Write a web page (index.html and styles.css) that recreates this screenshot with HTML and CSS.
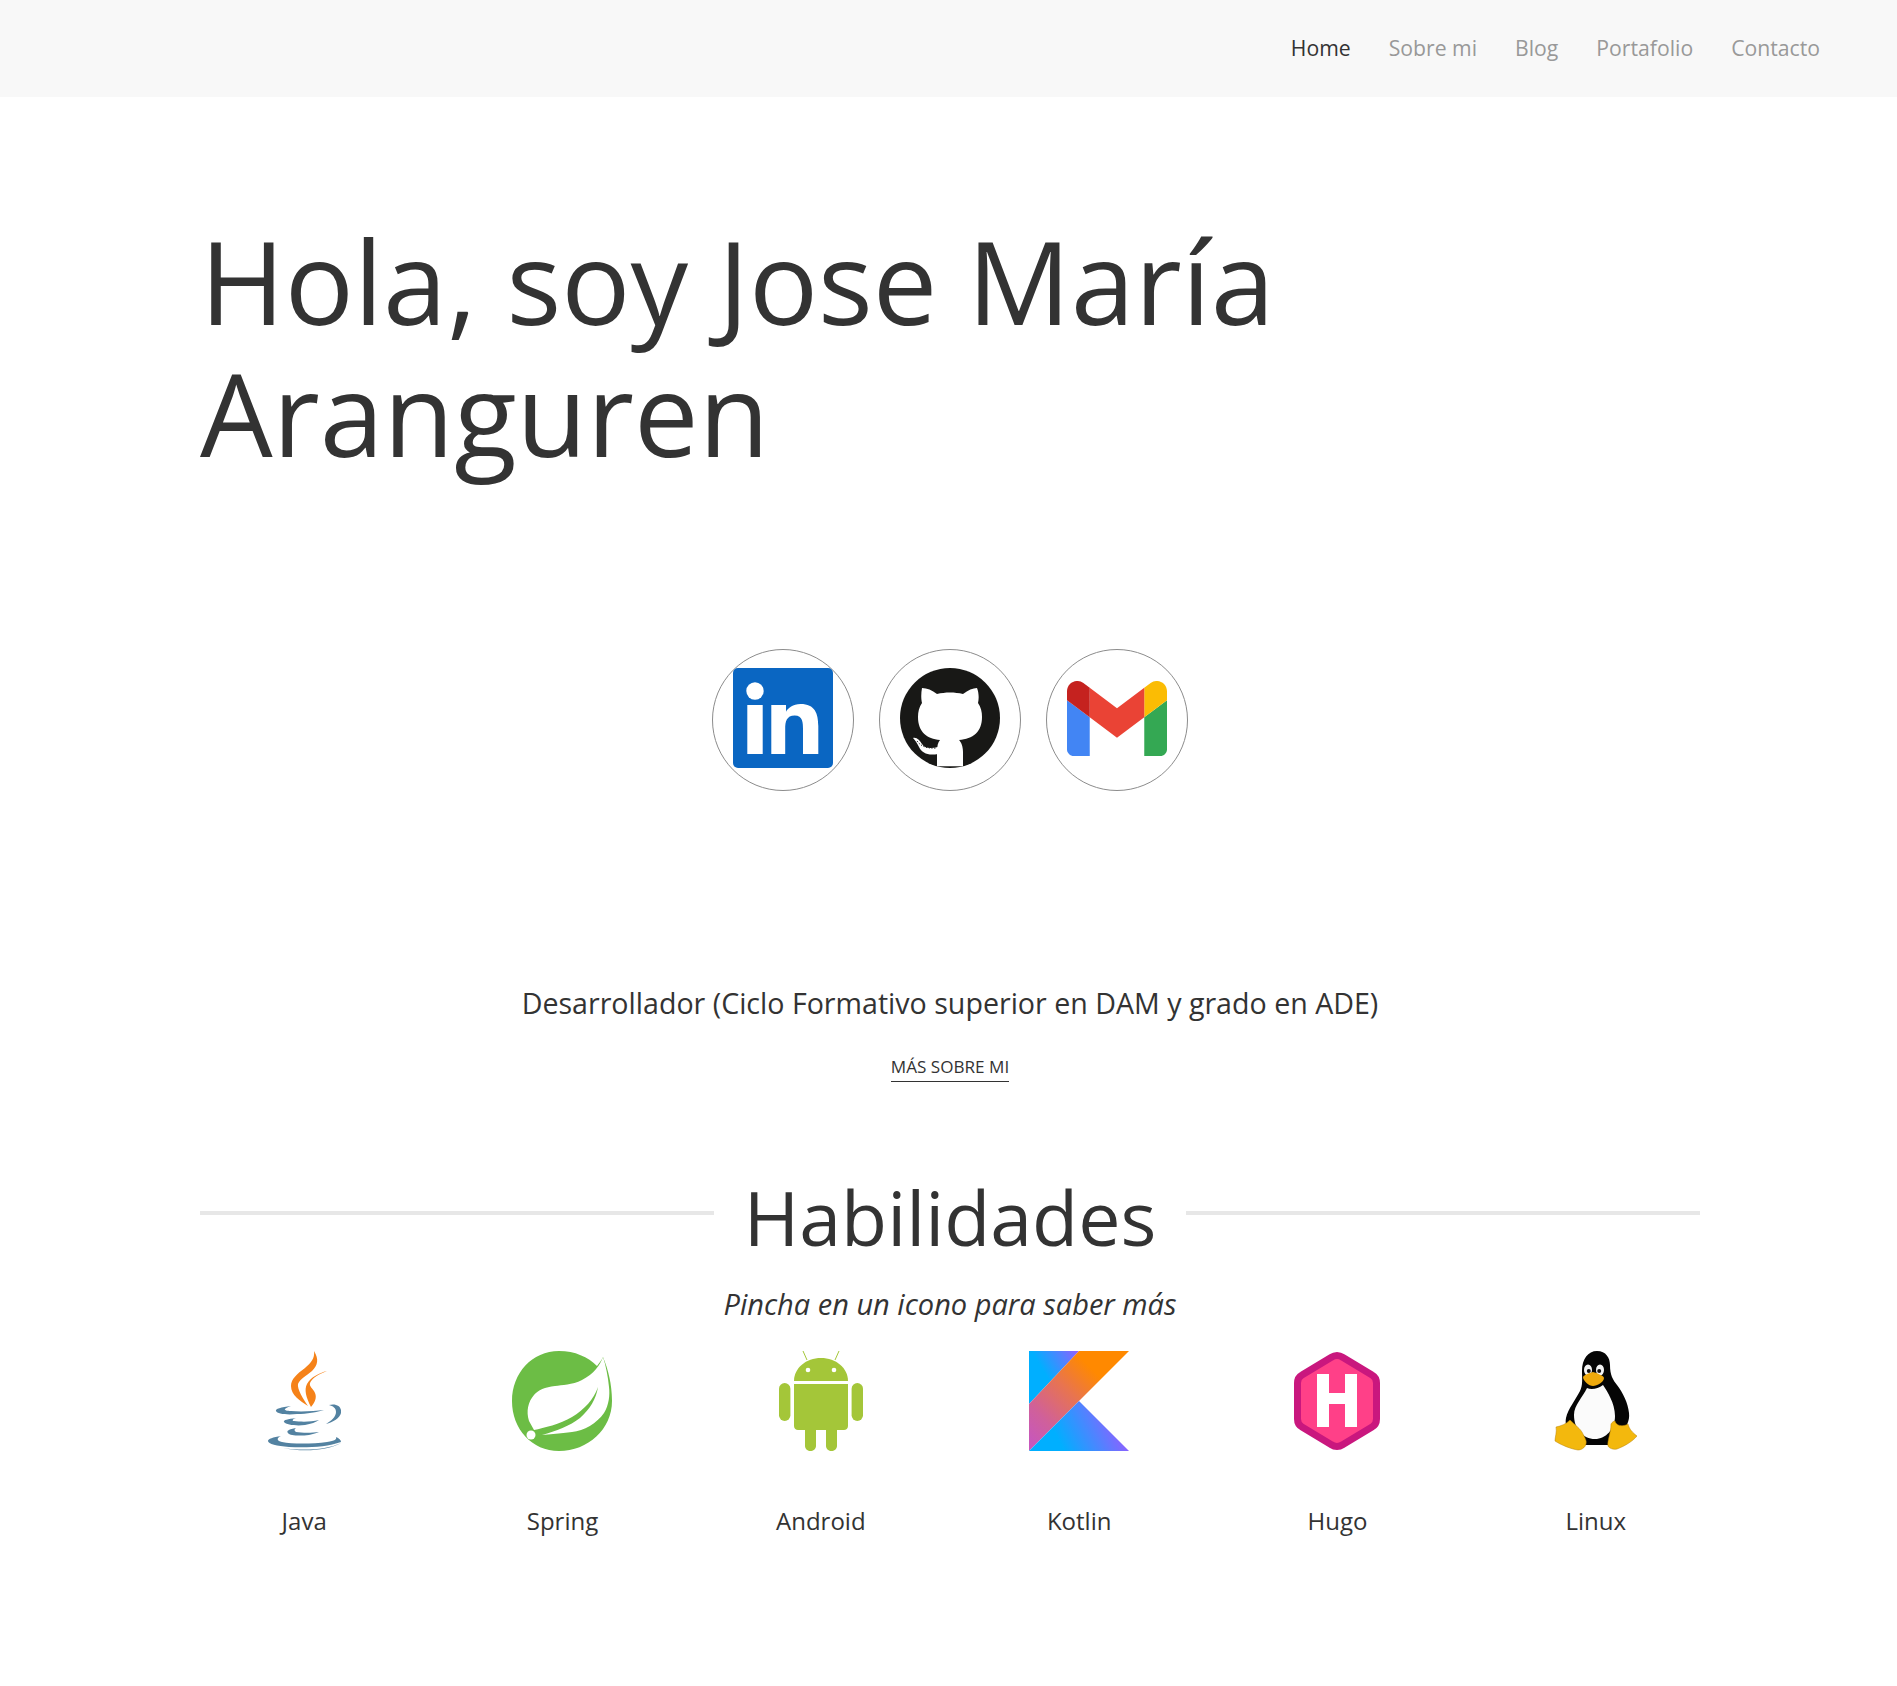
FILE: index.html
```html
<!DOCTYPE html>
<html lang="es">
<head>
  <meta charset="UTF-8">
  <meta name="viewport" content="width=device-width, initial-scale=1.0">
  <title>Jose María Aranguren</title>
  <link rel="stylesheet" href="styles.css">
</head>
<body>
  <header class="navbar">
    <ul class="nav">
      <li><a class="active" href="#">Home</a></li>
      <li><a href="#">Sobre mi</a></li>
      <li><a href="#">Blog</a></li>
      <li><a href="#">Portafolio</a></li>
      <li><a href="#">Contacto</a></li>
    </ul>
  </header>

  <main class="container">
    <h1 class="hero-title">Hola, soy Jose María Aranguren</h1>

    <div class="social">
      <a class="social-link" href="#" aria-label="LinkedIn">
        <svg viewBox="0 0 100 100" width="100" height="100">
          <rect width="100" height="100" rx="5" fill="#0a66c2"/>
          <circle cx="22" cy="23" r="8.7" fill="#fff"/>
          <rect x="14.3" y="37" width="15.4" height="49" fill="#fff"/>
          <path fill="#fff" d="M38.3 37H53v6.7c2-3.8 7-7.8 14.5-7.8C82 35.9 85.3 45.5 85.3 58v28H70V61c0-6-.1-13.6-8.3-13.6-8.3 0-9.5 6.5-9.5 13.2V86H38.3z"/>
        </svg>
      </a>
      <a class="social-link" href="#" aria-label="GitHub">
        <svg viewBox="0 0 100 100" width="100" height="100">
          <circle cx="50" cy="50" r="50" fill="#181816"/>
          <path fill="#fff" d="M22 20C27 20 32 22 37 26C45 24 55 24 63 26C68 22 73 20 77 20C79 25 79 31 78 35C81 39 82 44 82 49C82 64 73 71 59 72C61 74 63 78 63 84V98.3L37 98.3V84C37 78 38 74 40 72C27 71 18 64 18 49C18 44 19 39 22 35C21 31 21 25 22 20Z"/>
          <path fill="#fff" d="M13 70C17 69 20 73 22 76C24 80 30 81 38 79V86C28 88 22 85 19 79C17 75 15 72 13 70Z"/>
          <path fill="none" stroke="#181816" stroke-width="1" stroke-dasharray="1.2 1.6" d="M17 73C20 77 25 81 37 80"/>
        </svg>
      </a>
      <a class="social-link" href="#" aria-label="Gmail">
        <svg viewBox="52 42 88 66" width="100" height="75">
          <path fill="#4285f4" d="M58 108h14V74L52 59v43c0 3.32 2.69 6 6 6"/>
          <path fill="#34a853" d="M120 108h14c3.32 0 6-2.69 6-6V59l-20 15"/>
          <path fill="#fbbc04" d="M120 48v26l20-15V51c0-7.42-8.47-11.65-14.4-7.2"/>
          <path fill="#ea4335" d="M72 74V48l24 18 24-18v26L96 92"/>
          <path fill="#c5221f" d="M52 51v8l20 15V48l-5.6-4.2c-5.94-4.45-14.4-.22-14.4 7.2"/>
        </svg>
      </a>
    </div>

    <section class="intro">
      <p class="intro-text">Desarrollador (Ciclo Formativo superior en DAM y grado en ADE)</p>
      <a class="more-link" href="#">MÁS SOBRE MI</a>
    </section>

    <section class="skills">
      <h2 class="section-title">Habilidades</h2>
      <p class="section-note">Pincha en un icono para saber más</p>

      <div class="skill-grid">
        <a class="skill" href="#">
          <svg class="skill-icon" viewBox="0 0 74 100" width="74" height="100">
            <path fill="#f58219" d="M47 0C52 8 51 14 45 20C39 25 33 28 31 33C30 38 36 48 41 55C33 50 24 44 24 35C24 28 30 23 38 17C44 12 48 7 47 0Z"/>
            <path fill="#f58219" d="M60 20C52 22 44 26 40 33C37 39 39 46 44 56C48 51 50 47 48 42C46 37 42 36 43 32C45 27 52 23 60 20Z"/>
            <g fill="#5382a1">
              <path d="M24 55C14 56 8 58 9 60C10 63 20 64 30 63C40 63 50 61 57 59C48 60 35 61 24 60C20 60 17 59 18 58C19 57 21 56 24 55Z"/>
              <path d="M62 54C70 52 75 56 74 62C73 67 66 71 59 73C64 70 69 66 69 61C69 57 66 55 62 54Z"/>
              <path d="M29 67C21 68 16 69 17 71C19 74 30 75 38 74C44 73 49 71 52 69C44 71 34 71 27 70C25 70 25 68 29 67Z"/>
              <path d="M29 77C22 78 19 80 21 82C23 85 34 85 42 84C46 83 50 82 52 81C45 82 35 82 29 81C27 80 27 78 29 77Z"/>
              <path d="M14 85C6 86 1 88 1 90C1 93 10 95 22 96C40 97 60 96 74 91C74 89 72 87 69 86C70 88 68 90 60 91C45 93 25 93 15 91C10 90 9 87 14 85Z"/>
              <path d="M16 97C35 100 60 99 74 92C60 100 35 101 16 97Z"/>
            </g>
          </svg>
          <span class="skill-name">Java</span>
        </a>
        <a class="skill" href="#">
          <svg class="skill-icon" viewBox="0 0 101 100" width="101" height="100">
            <path fill="#6cbd45" d="M91 6C96 18 100 33 100 50C100 78 76 100 47 100C20 100 0 78 0 50C0 22 20 0 47 0C63 0 76 6 85 15C87 12 90 9 91 6Z"/>
            <path fill="#fff" d="M91 6C88 14 82 23 70 29C60 34 50 34 43 35C33 36 26 39 22 44C16 51 14 60 17 70L22 79C32 77 48 73 60 66C72 59 82 48 86 36C84 48 78 58 68 67C58 75 44 80 30 84C42 83 52 82 60 81C72 80 85 72 92 62C97 54 98 44 97 36C96 26 94 15 91 6Z"/>
            <circle cx="19" cy="84" r="4.5" fill="#fff"/>
          </svg>
          <span class="skill-name">Spring</span>
        </a>
        <a class="skill" href="#">
          <svg class="skill-icon" viewBox="0 0 84 100" width="84" height="100">
            <g fill="#a4c639">
              <path d="M15 30C15 17 27 7 42 7C57 7 69 17 69 30Z"/>
              <path d="M15 33H69V75C69 77.5 67 79 65 79H58V95C58 98 55 100 52.5 100C50 100 47 98 47 95V79H37V95C37 98 34 100 31.5 100C29 100 26 98 26 95V79H19C17 79 15 77.5 15 75Z"/>
              <rect y="32" width="11.4" height="38" rx="5.7"/>
              <rect x="72.6" y="32" width="11.4" height="38" rx="5.7"/>
            </g>
            <path stroke="#a4c639" stroke-width="1" d="M28 9L24 0M56 9L60 0"/>
            <circle cx="29" cy="19" r="2.3" fill="#fff"/>
            <circle cx="55" cy="19" r="2.3" fill="#fff"/>
          </svg>
          <span class="skill-name">Android</span>
        </a>
        <a class="skill" href="#">
          <svg class="skill-icon" viewBox="0 0 100 100" width="100" height="100">
            <defs>
              <linearGradient id="kotlinBlue" x1="5" y1="100" x2="85" y2="60" gradientUnits="userSpaceOnUse">
                <stop offset="0.3" stop-color="#00afff"/>
                <stop offset="0.7" stop-color="#5282ff"/>
                <stop offset="1" stop-color="#945dff"/>
              </linearGradient>
              <linearGradient id="kotlinTop" x1="0" y1="30" x2="50" y2="0" gradientUnits="userSpaceOnUse">
                <stop offset="0.3" stop-color="#00afff"/>
                <stop offset="0.7" stop-color="#5282ff"/>
                <stop offset="1" stop-color="#945dff"/>
              </linearGradient>
              <linearGradient id="kotlinBand" x1="0" y1="90" x2="75" y2="15" gradientUnits="userSpaceOnUse">
                <stop offset="0" stop-color="#c757bc"/>
                <stop offset="0.25" stop-color="#d0609a"/>
                <stop offset="0.6" stop-color="#e8744f"/>
                <stop offset="0.9" stop-color="#ff8900"/>
              </linearGradient>
            </defs>
            <polygon fill="url(#kotlinTop)" points="0,0 50,0 0,53"/>
            <polygon fill="url(#kotlinBand)" points="50,0 100,0 50,50 0,100 0,53"/>
            <polygon fill="url(#kotlinBlue)" points="0,100 50,50 100,100"/>
          </svg>
          <span class="skill-name">Kotlin</span>
        </a>
        <a class="skill" href="#">
          <svg class="skill-icon" viewBox="0 0 86 100" width="86" height="100">
            <path fill="#ff4088" stroke="#c9177e" stroke-width="7" stroke-linejoin="round" d="M37 6.5Q43 2.5 49 6.5L78 24Q82.5 26.5 82.5 32V68Q82.5 73.5 78 76L49 93.5Q43 97.5 37 93.5L8 76Q3.5 73.5 3.5 68V32Q3.5 26.5 8 24Z"/>
            <rect x="23" y="23" width="12" height="53" fill="#fff"/>
            <rect x="51" y="23" width="12" height="53" fill="#fff"/>
            <rect x="30" y="42" width="26" height="11" fill="#fff"/>
          </svg>
          <span class="skill-name">Hugo</span>
        </a>
        <a class="skill" href="#">
          <svg class="skill-icon" viewBox="0 0 83 100" width="83" height="100">
            <path fill="#050505" d="M43 0C52 0 56 7 56 14C56 24 59 29 63 34C69 42 74 52 75 62C76 70 72 76 68 82L56 94L31 94L18 84C12 78 11 72 12 67C14 58 22 48 26 40C29 34 28 28 28 20C28 8 34 0 43 0Z"/>
            <path fill="#fbfbfb" d="M33 37C37 39 44 38 49 34C53 40 61 52 61 65C61 78 52 88 41 88C29 88 20 78 20 64C20 54 29 46 33 37Z"/>
            <ellipse cx="34" cy="19" rx="4" ry="5.5" fill="#f4f4f4"/>
            <ellipse cx="46" cy="19" rx="4" ry="5.5" fill="#f4f4f4"/>
            <circle cx="34.8" cy="20" r="2" fill="#111"/>
            <circle cx="45.2" cy="20" r="2" fill="#111"/>
            <path fill="#eea90c" d="M39 21C43 22 50 25 50 27C50 31 43 35 39 35C35 35 29 30 29 26C30 24 35 22 39 21Z"/>
            <path fill="#f3b80d" stroke="#b98208" stroke-width=".5" d="M16 69C20 73 27 78 29 83C31 87 33 90 32 93C31 97 27 99 24 99C17 98 7 94 1 90C1 86 3 81 2 76C7 75 12 73 16 69Z"/>
            <path fill="#f3b80d" stroke="#b98208" stroke-width=".5" d="M61 70C62 75 69 76 74 73C75 78 79 82 83 85C79 90 71 95 63 98C59 99 55 97 54 95C53 90 57 82 57 73C58 71 60 70 61 70Z"/>
          </svg>
          <span class="skill-name">Linux</span>
        </a>
      </div>
    </section>
  </main>
</body>
</html>
```

FILE: styles.css
```css
body {
  font-family: "Open Sans", "Noto Sans", Arial, sans-serif;
  margin: 0;
  padding: 0;
  background-color: #ffffff;
  color: #333333;
}

a {
  color: inherit;
  text-decoration: none;
}

.navbar {
  display: flex;
  justify-content: flex-end;
  height: 97px;
  background-color: #f8f8f8;
}

.nav {
  display: flex;
  align-items: center;
  gap: 38px;
  list-style: none;
  margin: 0;
  padding: 0 77px 2px 0;
  font-size: 21.2px;
  color: #999999;
}

.nav .active {
  color: #333333;
}

.container {
  width: 1500px;
  margin: 0 197px 0 200px;
}

.hero-title {
  margin: 0;
  padding-top: 118px;
  font-size: 115px;
  font-weight: 400;
  line-height: 132px;
}

.social {
  display: flex;
  justify-content: center;
  gap: 25px;
  margin-top: 170px;
}

.social-link {
  display: flex;
  justify-content: center;
  align-items: center;
  width: 142px;
  height: 142px;
  box-sizing: border-box;
  padding-bottom: 4px;
  border: 1px solid #8c8c8c;
  border-radius: 50%;
}

.intro {
  margin-top: 190px;
  text-align: center;
}

.intro-text {
  margin: 0;
  font-size: 28.6px;
  line-height: 44px;
}

.more-link {
  display: inline-block;
  margin-top: 30px;
  padding-bottom: 2px;
  border-bottom: 1px solid #333333;
  font-size: 17.1px;
  line-height: 24px;
}

.skills {
  margin-top: 90px;
}

.section-title {
  display: flex;
  align-items: center;
  gap: 30px;
  margin: 0;
  font-size: 75.3px;
  font-weight: 400;
  line-height: 90px;
}

.section-title::before,
.section-title::after {
  content: "";
  flex: 1;
  height: 4px;
  margin-top: -8px;
  background-color: #e7e7e7;
}

.section-note {
  margin: 22px 0 0;
  text-align: center;
  font-size: 29px;
  font-style: italic;
  line-height: 40px;
}

.skill-grid {
  display: grid;
  grid-template-columns: repeat(6, 1fr);
  margin: 27px -25px 0;
}

.skill {
  display: flex;
  flex-direction: column;
  align-items: center;
}

.skill-icon {
  display: block;
}

.skill-name {
  margin-top: 53px;
  font-size: 24px;
  line-height: 34px;
}
```
